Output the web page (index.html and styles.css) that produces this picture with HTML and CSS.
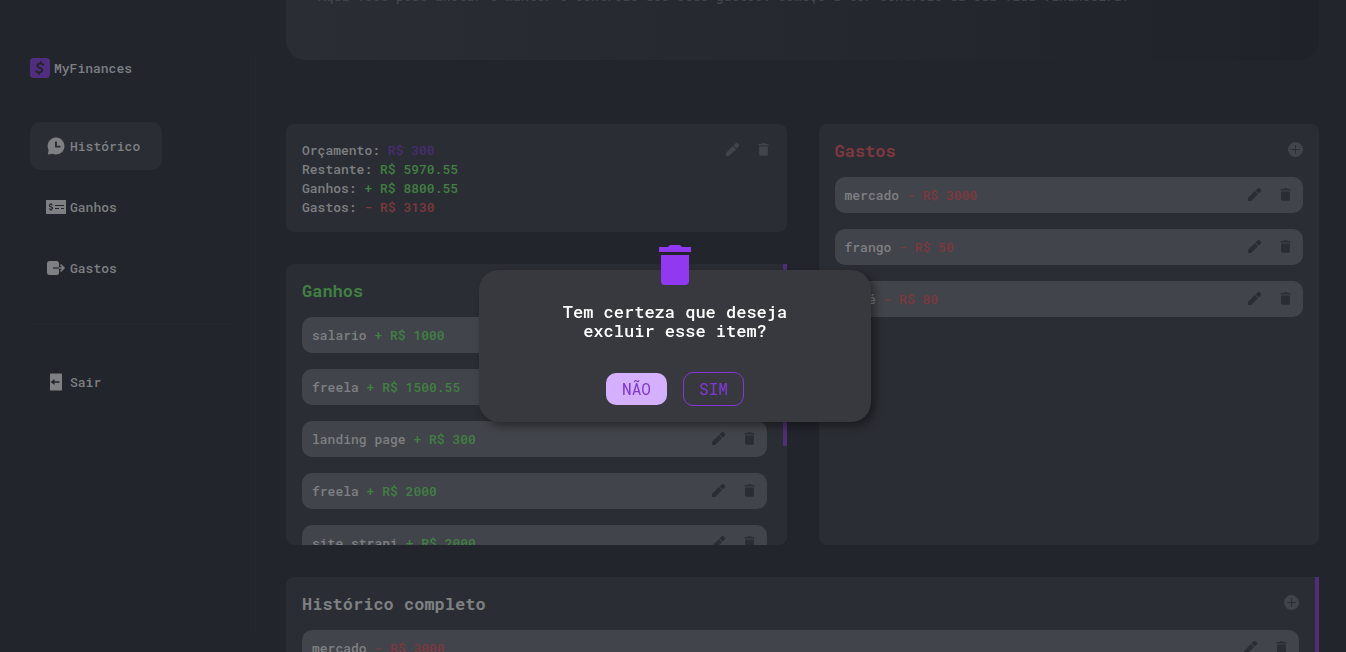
FILE: index.html
```html
<!DOCTYPE html>
<html lang="pt-BR">
<head>
<meta charset="utf-8">
<meta name="viewport" content="width=device-width, initial-scale=1">
<title>MyFinances</title>
<link rel="stylesheet" href="styles.css">
</head>
<body>
<svg class="sprite" aria-hidden="true">
  <symbol id="pencil" viewBox="0 0 24 24"><path d="M1.500 17.500V22.500h5L17.600 11.400 12.700 6.500zM22.500 6.600a1.500 1.500 0 0 0 0-2.200L19.700 1.600a1.500 1.500 0 0 0-2.200 0l-3.800 3.900 4.900 4.900z"/></symbol>
  <symbol id="trash" viewBox="0 0 24 24"><path d="M4 3h4.500c.6-.8.900-1 1.500-1h4c.6 0 .9.200 1.500 1H20v2.500H4zM5 7h14V20a2 2 0 0 1-2 2H7a2 2 0 0 1-2-2z"/></symbol>
  <symbol id="plus" viewBox="0 0 16 16"><path fill-rule="evenodd" d="M8 0a8 8 0 1 1 0 16A8 8 0 0 1 8 0zM7.500 3.500v4h-4v1h4v4h1v-4h4v-1h-4v-4z"/></symbol>
</svg>
<div class="app">
  <aside class="sidebar">
    <div class="logo">
      <svg class="icon logo-icon" viewBox="0 0 20 20"><rect width="20" height="20" rx="4" class="logo-box"/><path class="logo-mark" d="M13.700 7.300C13 5.700 11.800 5.400 10.500 5.400c-1.700 0-3 .8-3.100 2.200-.1 3 5.200 1.700 4.900 4.600-.2 1.500-1.500 2.200-3.100 2.200-1.400 0-2.700-.6-3.100-2M11.100 3.300l-.5 2.200M9.300 14.200l-.5 2.300"/></svg>
      <span>MyFinances</span>
    </div>
    <nav class="nav">
      <a class="nav-link active" href="#historico"><svg class="icon" viewBox="0 0 20 20"><path fill-rule="evenodd" d="M10 1.500a8.500 8.500 0 1 1-3.400 16.300L1.800 18.500 2.600 14A8.500 8.500 0 0 1 10 1.500zM9 5.500v6h5.500V9.700h-3.600V5.500z"/></svg><span>Histórico</span></a>
      <a class="nav-link" href="#ganhos"><svg class="icon" viewBox="0 0 20 20"><path d="M0 3h20v14H0z"/><path class="cut" d="M6.300 8C5.800 7.400 3.300 7.100 3.300 8.600c0 1.700 3.200.8 3.200 2.500 0 1.500-2.700 1.400-3.400.6M5 6v1.500M5 12.300v1.500M9 8.500h9M9 11.500h4M15 11.500h3"/></svg><span>Ganhos</span></a>
      <a class="nav-link" href="#gastos"><svg class="icon" viewBox="0 0 20 20"><rect x="1" y="3" width="12" height="14" rx="2.500"/><path class="cut" d="M7 10h6"/><path class="arrow" d="M13 10h5M14.500 6.500 18 10l-3.500 3.500"/></svg><span>Gastos</span></a>
    </nav>
    <a class="nav-link exit" href="#sair"><svg class="icon" viewBox="0 0 20 20"><path fill-rule="evenodd" d="M4 1.500h12v17H4zM13.500 9.300H8.500V7L4.600 10l3.900 3v-2.300h5z"/></svg><span>Sair</span></a>
  </aside>
  <main class="main">
    <header class="hero"><p>Aqui você pode anotar e manter o controle dos seus gastos. Começe a ter controle da sua vida financeira!</p></header>
    <div class="board">
      <div class="column">
        <section class="card summary">
          <div>
            <p>Orçamento: <span class="budget">R$ 300</span></p>
            <p>Restante: <span class="gain">R$ 5970.55</span></p>
            <p>Ganhos: <span class="gain">+ R$ 8800.55</span></p>
            <p>Gastos: <span class="loss">- R$ 3130</span></p>
          </div>
          <div class="actions"><button aria-label="Editar"><svg><use href="#pencil"/></svg></button><button aria-label="Excluir"><svg><use href="#trash"/></svg></button></div>
        </section>
        <section class="card scroll gains" id="ganhos">
          <div class="content">
            <div class="title"><h2 class="gain">Ganhos</h2></div>
            <ul class="list">
              <li><span>salario <span class="gain">+ R$ 1000</span></span><div class="actions"><button aria-label="Editar"><svg><use href="#pencil"/></svg></button><button aria-label="Excluir"><svg><use href="#trash"/></svg></button></div></li>
              <li><span>freela <span class="gain">+ R$ 1500.55</span></span><div class="actions"><button aria-label="Editar"><svg><use href="#pencil"/></svg></button><button aria-label="Excluir"><svg><use href="#trash"/></svg></button></div></li>
              <li><span>landing page <span class="gain">+ R$ 300</span></span><div class="actions"><button aria-label="Editar"><svg><use href="#pencil"/></svg></button><button aria-label="Excluir"><svg><use href="#trash"/></svg></button></div></li>
              <li><span>freela <span class="gain">+ R$ 2000</span></span><div class="actions"><button aria-label="Editar"><svg><use href="#pencil"/></svg></button><button aria-label="Excluir"><svg><use href="#trash"/></svg></button></div></li>
              <li><span>site strapi <span class="gain">+ R$ 2000</span></span><div class="actions"><button aria-label="Editar"><svg><use href="#pencil"/></svg></button><button aria-label="Excluir"><svg><use href="#trash"/></svg></button></div></li>
            </ul>
          </div>
          <div class="thumb"></div>
        </section>
      </div>
      <section class="card" id="gastos">
        <div class="content">
          <div class="title"><h2 class="loss">Gastos</h2><button class="add" aria-label="Adicionar gasto"><svg><use href="#plus"/></svg></button></div>
          <ul class="list">
            <li><span>mercado <span class="loss">- R$ 3000</span></span><div class="actions"><button aria-label="Editar"><svg><use href="#pencil"/></svg></button><button aria-label="Excluir"><svg><use href="#trash"/></svg></button></div></li>
            <li><span>frango <span class="loss">- R$ 50</span></span><div class="actions"><button aria-label="Editar"><svg><use href="#pencil"/></svg></button><button aria-label="Excluir"><svg><use href="#trash"/></svg></button></div></li>
            <li><span>café <span class="loss">- R$ 80</span></span><div class="actions"><button aria-label="Editar"><svg><use href="#pencil"/></svg></button><button aria-label="Excluir"><svg><use href="#trash"/></svg></button></div></li>
          </ul>
        </div>
      </section>
    </div>
    <section class="card scroll history" id="historico">
      <div class="content">
        <div class="title"><h2>Histórico completo</h2><button class="add" aria-label="Adicionar item"><svg><use href="#plus"/></svg></button></div>
        <ul class="list">
          <li><span>mercado <span class="loss">- R$ 3000</span></span><div class="actions"><button aria-label="Editar"><svg><use href="#pencil"/></svg></button><button aria-label="Excluir"><svg><use href="#trash"/></svg></button></div></li>
        </ul>
      </div>
      <div class="thumb"></div>
    </section>
  </main>
</div>
<div class="overlay">
  <div class="modal" role="dialog" aria-modal="true" aria-labelledby="question">
    <svg class="modal-icon" aria-hidden="true"><use href="#trash"/></svg>
    <p id="question">Tem certeza que deseja excluir esse item?</p>
    <div class="choices"><button class="no">NÃO</button><button class="yes">SIM</button></div>
  </div>
</div>
</body>
</html>
```
FILE: styles.css
```css
* { box-sizing: border-box; margin: 0; padding: 0; }
body {
  height: 100vh;
  overflow: hidden;
  background: #22252c;
  color: #7e8083;
  font: 500 13px/19px "Roboto Mono", "DejaVu Sans Mono", monospace;
}
button { border: 0; background: none; color: inherit; font: inherit; cursor: pointer; }
ul { list-style: none; }
.sprite { display: none; }
.app { display: flex; height: 100vh; }

.sidebar {
  flex: none;
  width: 256px;
  margin: 56px 0 20px;
  padding: 2px 23px 0 30px;
  border-right: 1px solid #26282f;
}
.icon { flex: none; width: 20px; height: 20px; fill: #7e8083; }
.icon .cut { fill: none; stroke: #22252c; stroke-width: 1.2; }
.icon .arrow { fill: none; stroke: #7e8083; stroke-width: 1.6; }
.logo { display: flex; align-items: center; gap: 4px; height: 20px; margin-bottom: 44px; }
.logo-icon .logo-box { fill: #512d80; }
.logo-icon .logo-mark { fill: none; stroke: #22252c; stroke-width: 2; }
.nav {
  display: flex;
  flex-direction: column;
  align-items: flex-start;
  gap: 13px;
  padding-bottom: 32px;
  border-bottom: 1px solid #26282f;
}
.nav-link {
  display: inline-flex;
  align-items: center;
  gap: 4px;
  height: 48px;
  padding: 0 22px 0 16px;
  border-radius: 10px;
  color: inherit;
  text-decoration: none;
}
.nav-link.active { background: #2b2d34; }
.exit { margin-top: 33px; }

.main { flex: 1; min-width: 0; padding: 0 27px 0 30px; overflow: hidden; }
.hero {
  height: 60px;
  margin-bottom: 64px;
  padding: 0 32px;
  overflow: hidden;
  border-radius: 0 0 20px 20px;
  background: linear-gradient(90deg, #2b2d34, #22252c 80%, #20222a);
  color: #42444b;
  white-space: nowrap;
}
.hero p { margin-top: -13px; }
.board { display: grid; grid-template-columns: 1fr 1fr; gap: 32px; margin-bottom: 32px; }
.column { display: flex; flex-direction: column; gap: 32px; min-width: 0; }
.card { overflow: hidden; border-radius: 8px; background: #2b2d34; }
.summary { display: flex; justify-content: space-between; padding: 17px 16px 15px; }
.scroll { display: flex; border-top-right-radius: 0; }
.content { flex: 1; min-width: 0; padding: 16px; }
.gains { height: 281px; }
.history { height: 281px; }
.thumb { flex: none; width: 4px; background: #512d73; }
.gains .thumb { height: 182px; }
.title { display: flex; justify-content: space-between; height: 37px; }
h2 { font-size: 17px; line-height: 22px; }
.add { width: 15px; height: 15px; margin-top: 2px; }
.add svg { display: block; width: 15px; height: 15px; fill: #42444b; }
.list { display: grid; gap: 16px; }
.list li {
  display: flex;
  justify-content: space-between;
  align-items: center;
  height: 36px;
  padding: 0 10px;
  border-radius: 10px;
  background: #42444b;
}
.actions { display: flex; gap: 16px; height: 16px; color: #2b2d34; }
.actions button { width: 15px; height: 15px; }
.actions svg { display: block; width: 15px; height: 15px; fill: currentColor; }
.summary .actions { margin-top: 1px; color: #42444b; }
.budget { color: #472c72; }
.gain { color: #408043; }
.loss { color: #7d383e; }

.overlay {
  position: fixed;
  inset: 0;
  display: flex;
  align-items: center;
  justify-content: center;
  padding: 40px 0 0 4px;
}
.modal {
  position: relative;
  width: 392px;
  padding: 32px 72px 16px;
  border-radius: 20px;
  background: #37393f;
  box-shadow: 4px 4px 8px rgba(0, 0, 0, 0.4);
  color: #fff;
  font-size: 16px;
  text-align: center;
}
.modal p { font-size: 17px; }
.modal-icon { position: absolute; top: -29px; left: 172px; width: 48px; height: 48px; fill: #9039f0; }
.choices { display: flex; align-items: center; justify-content: center; gap: 16px; margin-top: 32px; }
.choices button { width: 61px; height: 32px; padding-bottom: 2px; border-radius: 10px; color: #8037d6; font-weight: 400; }
.choices .no { background: #d4b0ff; }
.choices .yes { height: 34px; border: 1px solid #8037d6; }
```
